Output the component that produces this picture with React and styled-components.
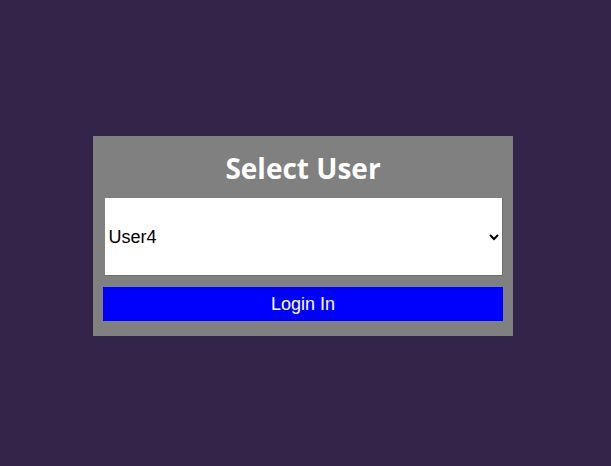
import React, { useState } from "react";
import styled, { createGlobalStyle } from "styled-components";

const GlobalStyle = createGlobalStyle`
  html, body {
    margin: 0;
    padding: 0;
    background: #33244a;
  }
`;

const Page = styled.div`
  min-height: 100vh;
  box-sizing: border-box;
  display: flex;
  justify-content: center;
  align-items: center;
  padding: 6px 5px 0 0;
`;

const Card = styled.div`
  width: 420px;
  height: 200px;
  box-sizing: border-box;
  background: #808080;
  padding: 12px 10px 15px 10px;
  display: flex;
  flex-direction: column;
  align-items: center;
`;

const Title = styled.h2`
  margin: 0;
  height: 50px;
  line-height: 40px;
  font-family: "Open Sans", "Noto Sans", sans-serif;
  font-weight: 700;
  font-size: 28px;
  color: #ffffff;
`;

const UserSelect = styled.select`
  width: 398px;
  height: 78px;
  box-sizing: border-box;
  margin: 0 0 11px 1px;
  padding: 0 4px 0 0;
  border: none;
  border-right: 1px solid #6e6e6e;
  border-bottom: 1px solid #6e6e6e;
  border-radius: 0;
  background: #ffffff;
  color: #000000;
  font-family: "Liberation Sans", Arial, sans-serif;
  font-size: 18px;
  outline: none;
`;

const LoginButton = styled.button`
  width: 400px;
  height: 34px;
  border: none;
  border-radius: 0;
  background: #0000ff;
  color: #ffffff;
  font-family: "Liberation Sans", Arial, sans-serif;
  font-size: 18px;
  cursor: pointer;
`;

const users = ["User1", "User2", "User3", "User4", "User5"];

const App = () => {
  const [user, setUser] = useState("User4");
  return (
    <>
      <GlobalStyle />
      <Page>
        <Card>
          <Title>Select User</Title>
          <UserSelect value={user} onChange={(e) => setUser(e.target.value)}>
            {users.map((u) => (
              <option key={u} value={u}>
                {u}
              </option>
            ))}
          </UserSelect>
          <LoginButton>Login In</LoginButton>
        </Card>
      </Page>
    </>
  );
};

export default App;
